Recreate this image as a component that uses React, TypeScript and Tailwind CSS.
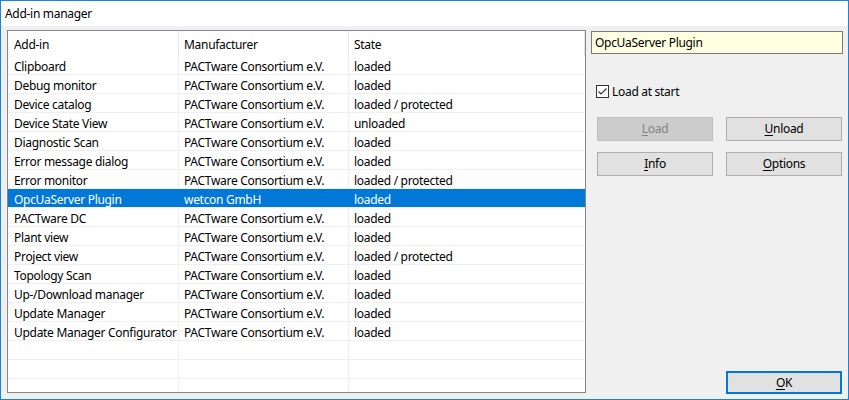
import React from "react";

const rows: [string, string, string][] = [
  ["Clipboard", "PACTware Consortium e.V.", "loaded"],
  ["Debug monitor", "PACTware Consortium e.V.", "loaded"],
  ["Device catalog", "PACTware Consortium e.V.", "loaded / protected"],
  ["Device State View", "PACTware Consortium e.V.", "unloaded"],
  ["Diagnostic Scan", "PACTware Consortium e.V.", "loaded"],
  ["Error message dialog", "PACTware Consortium e.V.", "loaded"],
  ["Error monitor", "PACTware Consortium e.V.", "loaded / protected"],
  ["OpcUaServer Plugin", "wetcon GmbH", "loaded"],
  ["PACTware DC", "PACTware Consortium e.V.", "loaded"],
  ["Plant view", "PACTware Consortium e.V.", "loaded"],
  ["Project view", "PACTware Consortium e.V.", "loaded / protected"],
  ["Topology Scan", "PACTware Consortium e.V.", "loaded"],
  ["Up-/Download manager", "PACTware Consortium e.V.", "loaded"],
  ["Update Manager", "PACTware Consortium e.V.", "loaded"],
  ["Update Manager Configurator", "PACTware Consortium e.V.", "loaded"],
  ["", "", ""],
  ["", "", ""],
  ["", "", ""],
];

function Btn({
  children,
  disabled,
}: {
  children: React.ReactNode;
  disabled?: boolean;
}) {
  return (
    <div
      className={
        "w-[116px] h-[24px] flex items-center justify-center border " +
        (disabled
          ? "bg-[#cccccc] border-[#bfbfbf] text-[#838383]"
          : "bg-[#e1e1e1] border-[#adadad] text-black")
      }
    >
      {children}
    </div>
  );
}

export default function App() {
  return (
    <div
      className="w-[849px] h-[400px] border border-[#1883d7] flex flex-col text-[12px] text-black leading-none overflow-hidden whitespace-nowrap tracking-[-0.3px]"
      style={{ fontFamily: '"Noto Sans", "Open Sans", sans-serif' }}
    >
      <div className="h-[25px] bg-white flex items-center pl-[4px] shrink-0">
        Add-in manager
      </div>
      <div className="flex-1 bg-[#f0f0f0] flex pt-[4px] pl-[6px] pr-[5px] pb-[5px] gap-[5px]">
        {/* list */}
        <div className="w-[579px] h-[363px] border border-[#828790] bg-white flex flex-col overflow-hidden">
          <div className="h-[25px] flex shrink-0">
            <div className="w-[171px] border-r border-[#e5e5e5] flex items-center pl-[6px] pt-[2px]">
              Add-in
            </div>
            <div className="w-[170px] border-r border-[#e5e5e5] flex items-center pl-[5px] pt-[2px]">
              Manufacturer
            </div>
            <div className="w-[236px] border-r border-[#e5e5e5] flex items-center pl-[5px] pt-[2px]">
              State
            </div>
          </div>
          {rows.map((r, i) => {
            const sel = i === 7;
            return (
              <div
                key={i}
                className={
                  "h-[19px] flex shrink-0 border-b border-[#f0f0f0] " +
                  (sel ? "bg-[#0078d7] text-white" : "")
                }
              >
                <div
                  className={
                    "w-[171px] border-r flex items-center pl-[6px] pt-[3px] " +
                    (sel ? "border-[#0078d7]" : "border-[#f0f0f0]")
                  }
                >
                  {r[0]}
                </div>
                <div
                  className={
                    "w-[170px] border-r flex items-center pl-[5px] pt-[3px] " +
                    (sel ? "border-[#0078d7]" : "border-[#f0f0f0]")
                  }
                >
                  {r[1]}
                </div>
                <div className="w-[236px] flex items-center pl-[5px] pt-[3px]">
                  {r[2]}
                </div>
              </div>
            );
          })}
        </div>
        {/* right panel */}
        <div className="w-[252px] flex flex-col">
          <div className="h-[23px] mt-[1px] bg-[#ffffe1] border border-[#7a7a7a] flex items-center pl-[3px] pt-[1px]">
            OpcUaServer Plugin
          </div>
          <div className="flex items-center mt-[31px] ml-[5px] h-[13px]">
            <div className="w-[13px] h-[13px] border border-[#333333] bg-white flex items-center justify-center">
              <svg width="11" height="11" viewBox="0 0 11 11">
                <path
                  d="M1.5 5.5 L4 8 L9.5 2.5"
                  fill="none"
                  stroke="#333333"
                  strokeWidth="1.2"
                />
              </svg>
            </div>
            <span className="ml-[3px] pt-[1px]">Load at start</span>
          </div>
          <div className="flex gap-[13px] mt-[19px] ml-[6px]">
            <Btn disabled>
              <u className="underline-offset-2">L</u>oad
            </Btn>
            <Btn>
              <u className="underline-offset-2">U</u>nload
            </Btn>
          </div>
          <div className="flex gap-[13px] mt-[11px] ml-[6px]">
            <Btn>
              <u className="underline-offset-2">I</u>nfo
            </Btn>
            <Btn>
              <u className="underline-offset-2">O</u>ptions
            </Btn>
          </div>
          <div className="flex-1" />
          <div className="flex justify-end pr-[1px]">
            <div className="w-[116px] h-[23px] border-2 border-[#0078d7] bg-[#e1e1e1] flex items-center justify-center">
              <u className="underline-offset-2">O</u>K
            </div>
          </div>
        </div>
      </div>
    </div>
  );
}
